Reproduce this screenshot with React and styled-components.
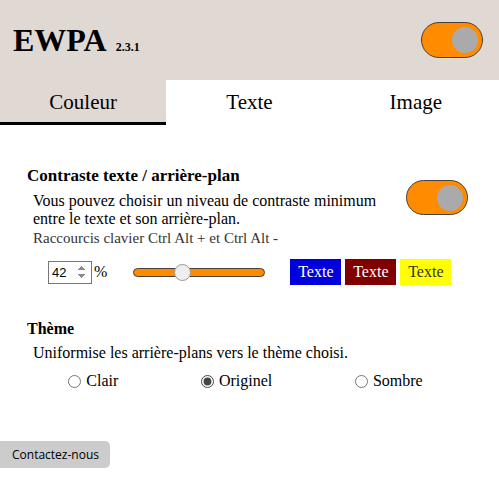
import React, { useState } from "react";
import styled, { createGlobalStyle } from "styled-components";

const GlobalStyle = createGlobalStyle`
	html, body {
		margin: 0;
		padding: 0;
		background: #fff;
	}
	body {
		font-family: "Liberation Serif", "Times New Roman", serif;
		color: #000;
	}
`;

const Page = styled.div`
	width: 499px;
	min-height: 482px;
	display: flex;
	flex-direction: column;
`;

const Header = styled.header`
	height: 80px;
	display: flex;
	align-items: center;
	justify-content: space-between;
	padding: 0 16px 0 13px;
	background: #e0d8d3;
	box-sizing: border-box;
`;

const Title = styled.h1`
	margin: 0;
	font-size: 32px;
	font-weight: bold;
	display: flex;
	align-items: baseline;
	gap: 9px;
`;

const Version = styled.span`
	font-size: 12px;
	font-weight: bold;
`;

const Switch = styled.button`
	width: 62px;
	height: 36px;
	padding: 0 4px;
	border: 1px solid #4a4038;
	border-radius: 18px;
	background: ${(p) => (p.$on ? "#ff8c00" : "#ccc")};
	display: flex;
	align-items: center;
	justify-content: ${(p) => (p.$on ? "flex-end" : "flex-start")};
	cursor: pointer;
	box-sizing: border-box;
`;

const Knob = styled.span`
	width: 26px;
	height: 26px;
	border-radius: 50%;
	background: #aaa;
`;

const Tabs = styled.nav`
	display: grid;
	grid-template-columns: repeat(3, 1fr);
`;

const Tab = styled.div`
	height: 45px;
	display: flex;
	align-items: center;
	justify-content: center;
	font-size: 21px;
	background: ${(p) => (p.$active ? "#e0d8d3" : "#fff")};
	border-bottom: 3px solid ${(p) => (p.$active ? "#000" : "transparent")};
	box-sizing: border-box;
	padding-top: 2px;
`;

const Content = styled.main`
	padding: 41px 31px 0 27px;
`;

const Heading = styled.h3`
	margin: 0;
	font-size: 17px;
	font-weight: bold;
`;

const IntroRow = styled.div`
	display: flex;
	justify-content: space-between;
	align-items: flex-start;
	margin-top: 6px;
`;

const Desc = styled.p`
	margin: 0;
	padding-left: 6px;
	font-size: 16px;
	line-height: 18px;
`;

const Hint = styled.span`
	display: block;
	margin-top: 1px;
	font-size: 15px;
	color: #333;
`;

const IntroSwitch = styled(Switch)`
	height: 35px;
	margin-top: -12px;
`;

const Controls = styled.div`
	display: flex;
	align-items: center;
	margin-top: 12px;
	padding-left: 21px;
`;

const NumberInput = styled.input`
	width: 44px;
	height: 23px;
	box-sizing: border-box;
	border: 1px solid #767676;
	font-family: "Liberation Sans", Arial, sans-serif;
	font-size: 13px;
	padding: 0 2px 0 3px;

	&::-webkit-inner-spin-button {
		opacity: 1;
	}
`;

const Percent = styled.span`
	font-size: 16px;
	margin-left: 2px;
`;

const Range = styled.input`
	-webkit-appearance: none;
	appearance: none;
	width: 132px;
	height: 18px;
	margin: 0 25px 0 26px;
	background: transparent;

	&::-webkit-slider-runnable-track {
		height: 9px;
		background: #ff8c00;
		border: 1px solid #4a4038;
		border-radius: 6px;
	}

	&::-webkit-slider-thumb {
		-webkit-appearance: none;
		width: 17px;
		height: 17px;
		margin-top: -5px;
		border-radius: 50%;
		background: #eee;
		border: 1px solid #999;
	}
`;

const Swatches = styled.div`
	display: flex;
	gap: 4px;
`;

const Swatch = styled.span`
	width: 51px;
	height: 26px;
	display: flex;
	align-items: center;
	justify-content: center;
	font-size: 16px;
	background: ${(p) => p.$bg};
	color: ${(p) => p.$fg};
`;

const ThemeSection = styled.section`
	margin-top: 35px;
`;

const ThemeHeading = styled.h4`
	margin: 0;
	font-size: 16px;
	font-weight: bold;
`;

const ThemeDesc = styled.p`
	margin: 6px 0 0;
	padding-left: 6px;
	font-size: 16px;
`;

const Radios = styled.div`
	display: flex;
	justify-content: space-around;
	margin-top: 10px;
	padding-right: 4px;
`;

const RadioLabel = styled.label`
	display: flex;
	align-items: center;
	gap: 5px;
	font-size: 16px;

	input {
		margin: 0;
		width: 13px;
		height: 13px;
		accent-color: #444;
	}
`;

const Footer = styled.footer`
	margin-top: auto;
	padding-bottom: 14px;
`;

const ContactButton = styled.button`
	height: 27px;
	padding: 0 11px 0 12px;
	border: none;
	border-radius: 0 5px 5px 0;
	background: #ccc;
	font-family: "Open Sans", "Noto Sans", sans-serif;
	font-size: 12px;
	color: #000;
	cursor: pointer;
`;

const tabs = ["Couleur", "Texte", "Image"];

const swatches = [
	{ bg: "#0000dd", fg: "#fff" },
	{ bg: "#800000", fg: "#fff" },
	{ bg: "#ffff00", fg: "#333" },
];

const themes = ["Clair", "Originel", "Sombre"];

export default function App() {
	const [level, setLevel] = useState(42);
	const [theme, setTheme] = useState("Originel");

	return (
		<Page>
			<GlobalStyle />
			<Header>
				<Title>
					EWPA <Version>2.3.1</Version>
				</Title>
				<Switch $on aria-label="Activer">
					<Knob />
				</Switch>
			</Header>

			<Tabs>
				{tabs.map((t, i) => (
					<Tab key={t} $active={i === 0}>
						{t}
					</Tab>
				))}
			</Tabs>

			<Content>
				<Heading>Contraste texte / arrière-plan</Heading>
				<IntroRow>
					<Desc>
						Vous pouvez choisir un niveau de contraste minimum
						<br />
						entre le texte et son arrière-plan.
						<Hint>Raccourcis clavier Ctrl Alt + et Ctrl Alt -</Hint>
					</Desc>
					<IntroSwitch $on aria-label="Contraste">
						<Knob />
					</IntroSwitch>
				</IntroRow>

				<Controls>
					<NumberInput
						type="number"
						value={level}
						onChange={(e) => setLevel(Number(e.target.value))}
					/>
					<Percent>%</Percent>
					<Range
						type="range"
						min="0"
						max="120"
						value={level}
						onChange={(e) => setLevel(Number(e.target.value))}
					/>
					<Swatches>
						{swatches.map((s) => (
							<Swatch key={s.bg} $bg={s.bg} $fg={s.fg}>
								Texte
							</Swatch>
						))}
					</Swatches>
				</Controls>

				<ThemeSection>
					<ThemeHeading>Thème</ThemeHeading>
					<ThemeDesc>Uniformise les arrière-plans vers le thème choisi.</ThemeDesc>
					<Radios>
						{themes.map((t) => (
							<RadioLabel key={t}>
								<input
									type="radio"
									name="theme"
									checked={theme === t}
									onChange={() => setTheme(t)}
								/>
								{t}
							</RadioLabel>
						))}
					</Radios>
				</ThemeSection>
			</Content>

			<Footer>
				<ContactButton>Contactez-nous</ContactButton>
			</Footer>
		</Page>
	);
}
